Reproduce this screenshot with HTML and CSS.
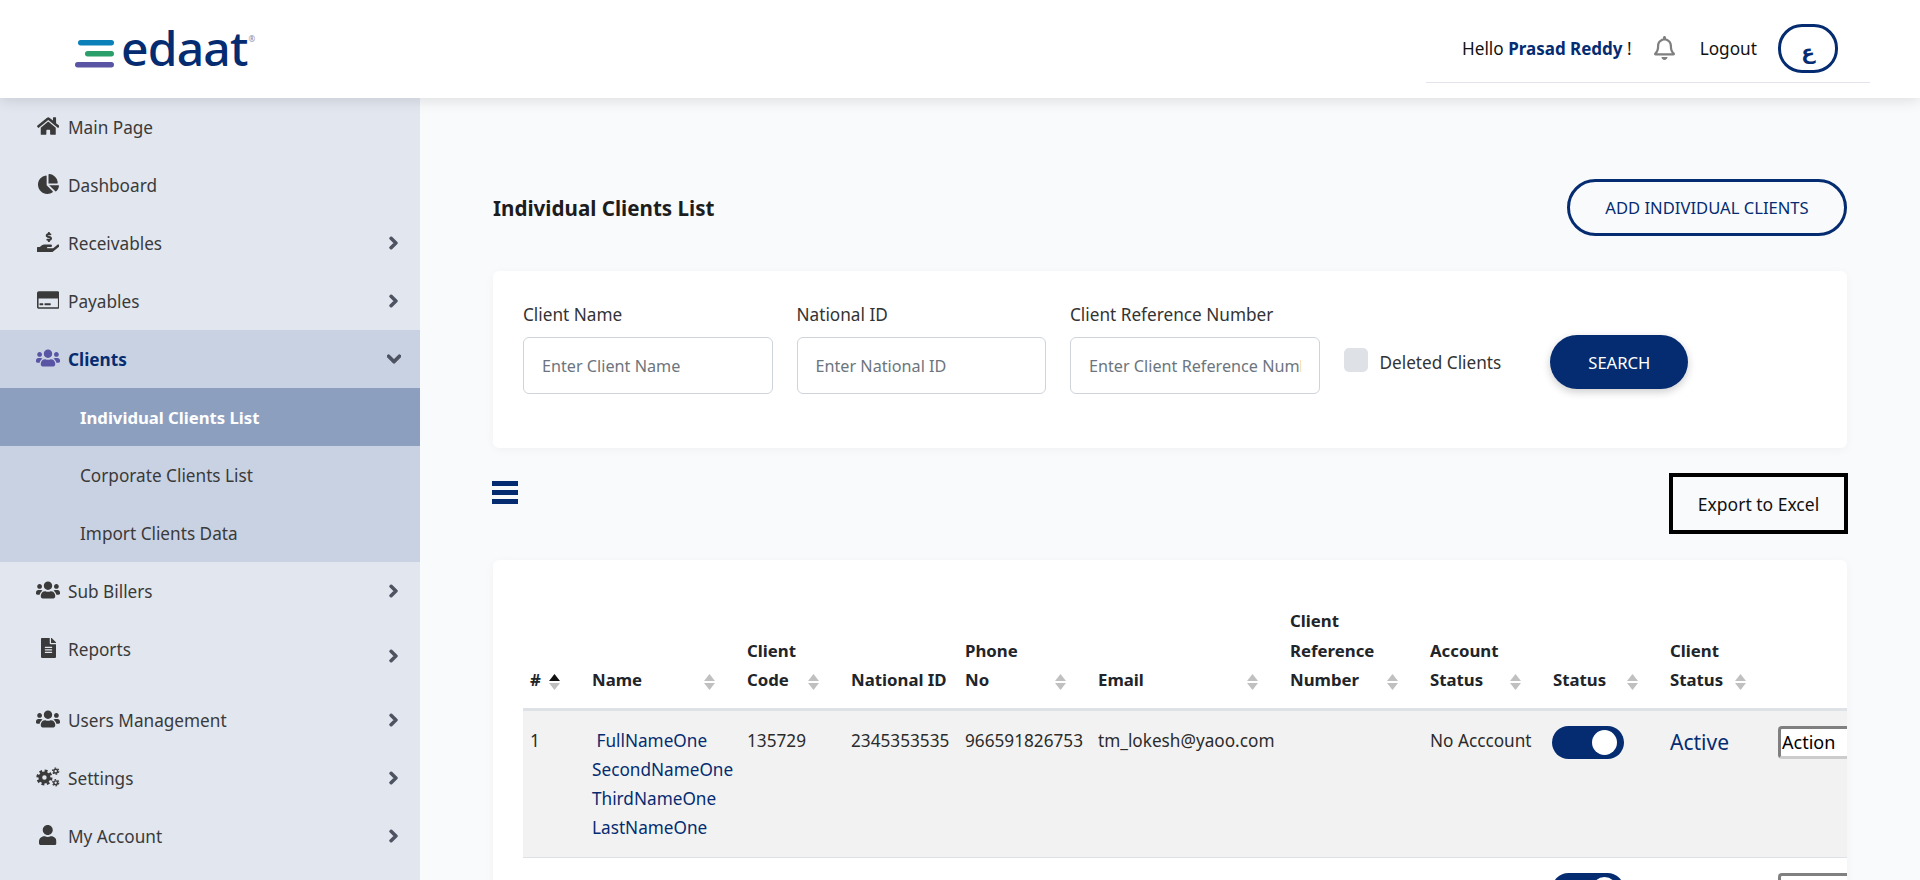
FILE: index.html
```html
<!DOCTYPE html>
<html lang="en">
<head>
  <meta charset="UTF-8" />
  <title>Individual Clients List</title>
  <link rel="stylesheet" href="styles.css">
</head>
<body>
  <!-- icons -->
  <svg class="sprite" xmlns="http://www.w3.org/2000/svg">
    <symbol id="i-home" viewBox="0 0 576 512"><path d="M280.37 148.26L96 300.11V464a16 16 0 0 0 16 16l112.06-.29a16 16 0 0 0 15.92-16V368a16 16 0 0 1 16-16h64a16 16 0 0 1 16 16v95.64a16 16 0 0 0 16 16.05L464 480a16 16 0 0 0 16-16V300L295.67 148.26a12.19 12.19 0 0 0-15.3 0zM571.6 251.47L488 182.56V44.05a12 12 0 0 0-12-12h-56a12 12 0 0 0-12 12v72.61L318.47 43a48 48 0 0 0-61 0L4.34 251.47a12 12 0 0 0-1.6 16.9l25.5 31A12 12 0 0 0 45.15 301l235.22-193.74a12.19 12.19 0 0 1 15.3 0L530.9 301a12 12 0 0 0 16.9-1.6l25.5-31a12 12 0 0 0-1.7-16.93z"/></symbol>
    <symbol id="i-pie" viewBox="0 0 544 512"><path d="M527.79 288H290.5l158.03 158.03c6.04 6.04 15.98 6.53 22.19.68 38.7-36.46 65.32-85.61 73.13-140.86 1.34-9.46-6.51-17.85-16.06-17.85zm-15.83-64.8C503.72 103.74 408.26 8.28 288.8.04 279.68-.59 272 7.1 272 16.24V240h223.77c9.14 0 16.82-7.68 16.19-16.8zM224 288V50.71c0-9.55-8.39-17.4-17.84-16.06C86.99 51.49-4.1 155.6.14 280.37 4.5 408.51 114.83 513.59 243.03 511.98c50.4-.63 96.97-16.87 135.26-44.03 7.9-5.6 8.42-17.23 1.57-24.08L224 288z"/></symbol>
    <symbol id="i-hand" viewBox="0 0 576 512"><path d="M271.06,144.3l54.27,14.3a8.59,8.59,0,0,1,6.63,8.1c0,4.6-4.09,8.4-9.12,8.4h-35.6a30,30,0,0,1-11.19-2.2c-5.24-2.2-11.28-1.7-15.3,2l-19,17.5a11.68,11.68,0,0,0-2.25,2.66,11.42,11.42,0,0,0,3.88,15.74,83.77,83.77,0,0,0,34.51,11.5V240c0,8.8,7.83,16,17.37,16h17.37c9.55,0,17.38-7.2,17.38-16V222.4c32.93-3.6,57.84-31,53.5-63-3.15-23-22.46-41.3-46.56-47.7L282.68,97.4a8.59,8.59,0,0,1-6.63-8.1c0-4.6,4.09-8.4,9.12-8.4h35.6A30,30,0,0,1,332,83.1c5.23,2.2,11.28,1.7,15.3-2l19-17.5A11.31,11.31,0,0,0,368.47,61a11.43,11.43,0,0,0-3.84-15.78,83.82,83.82,0,0,0-34.52-11.5V16c0-8.8-7.82-16-17.37-16H295.37C285.82,0,278,7.2,278,16V33.6c-32.89,3.6-57.85,31-53.51,63C227.63,119.6,247,137.9,271.06,144.3ZM565.27,328.1c-11.8-10.7-30.2-10-42.6,0L430.27,402a63.64,63.64,0,0,1-40,14H272a16,16,0,0,1,0-32h78.29c15.9,0,30.71-10.9,33.25-26.6a31.2,31.2,0,0,0,.46-5.46A32,32,0,0,0,352,320H192a117.66,117.66,0,0,0-74.1,26.29L71.4,384H16A16,16,0,0,0,0,400v96a16,16,0,0,0,16,16H372.77a64,64,0,0,0,40-14L564,377a32,32,0,0,0,1.28-48.9Z"/></symbol>
    <symbol id="i-card" viewBox="0 0 576 512"><path fill-rule="evenodd" d="M48 32h480c26.5 0 48 21.5 48 48v352c0 26.5-21.5 48-48 48H48c-26.5 0-48-21.5-48-48V80c0-26.5 21.5-48 48-48zM40 216v224h496V216zM76 340h72c6.6 0 12 5.4 12 12v28c0 6.6-5.4 12-12 12H76c-6.6 0-12-5.4-12-12v-28c0-6.600 5.400-12 12-12zM204 340h136c6.6 0 12 5.4 12 12v28c0 6.6-5.4 12-12 12H204c-6.6 0-12-5.4-12-12v-28c0-6.6 5.400-12 12-12z"/></symbol>
    <symbol id="i-users" viewBox="0 0 640 512"><path d="M96 224c35.3 0 64-28.7 64-64s-28.7-64-64-64-64 28.7-64 64 28.7 64 64 64zm448 0c35.3 0 64-28.7 64-64s-28.7-64-64-64-64 28.7-64 64 28.7 64 64 64zm32 32h-64c-17.6 0-33.5 7.1-45.1 18.6 40.3 22.1 68.9 62 75.1 109.4h66c17.7 0 32-14.3 32-32v-32c0-35.3-28.7-64-64-64zm-256 0c61.9 0 112-50.1 112-112S381.9 32 320 32 208 82.1 208 144s50.1 112 112 112zm76.8 32h-8.3c-20.8 10-43.9 16-68.5 16s-47.6-6-68.5-16h-8.3C179.6 288 128 339.6 128 403.2V432c0 26.5 21.5 48 48 48h288c26.5 0 48-21.5 48-48v-28.8c0-63.6-51.6-115.2-115.2-115.2zm-223.7-13.4C161.5 263.1 145.6 256 128 256H64c-35.3 0-64 28.7-64 64v32c0 17.7 14.3 32 32 32h65.9c6.3-47.4 34.9-87.3 75.2-109.4z"/></symbol>
    <symbol id="i-file" viewBox="0 0 384 512"><path d="M224 136V0H24C10.7 0 0 10.7 0 24v464c0 13.3 10.7 24 24 24h336c13.3 0 24-10.7 24-24V160H248c-13.2 0-24-10.8-24-24zm64 236c0 6.6-5.4 12-12 12H108c-6.6 0-12-5.4-12-12v-8c0-6.6 5.4-12 12-12h168c6.6 0 12 5.4 12 12v8zm0-64c0 6.6-5.4 12-12 12H108c-6.6 0-12-5.4-12-12v-8c0-6.6 5.4-12 12-12h168c6.6 0 12 5.4 12 12v8zm0-72v8c0 6.6-5.4 12-12 12H108c-6.6 0-12-5.4-12-12v-8c0-6.6 5.4-12 12-12h168c6.6 0 12 5.4 12 12zm96-114.1v6.1H256V0h6.1c6.4 0 12.5 2.5 17 7l97.9 98c4.5 4.5 7 10.6 7 16.9z"/></symbol>
    <symbol id="i-cogs" viewBox="0 0 640 512">
      <circle cx="225" cy="270" r="110" fill="none" stroke="currentColor" stroke-width="100"/>
      <circle cx="225" cy="270" r="180" fill="none" stroke="currentColor" stroke-width="70" stroke-dasharray="76 65.370"/>
      <circle cx="525" cy="100" r="50" fill="none" stroke="currentColor" stroke-width="38"/>
      <circle cx="525" cy="100" r="82" fill="none" stroke="currentColor" stroke-width="32" stroke-dasharray="45 40.860"/>
      <circle cx="525" cy="410" r="50" fill="none" stroke="currentColor" stroke-width="38"/>
      <circle cx="525" cy="410" r="82" fill="none" stroke="currentColor" stroke-width="32" stroke-dasharray="45 40.860"/>
    </symbol>
    <symbol id="i-user" viewBox="0 0 448 512"><path d="M224 256c70.700 0 128-57.300 128-128S294.700 0 224 0 96 57.300 96 128s57.300 128 128 128zm89.600 32h-16.700c-22.200 10.200-46.900 16-72.900 16s-50.600-5.800-72.900-16h-16.700C60.200 288 0 348.200 0 422.400V464c0 26.500 21.500 48 48 48h352c26.500 0 48-21.500 48-48v-41.600c0-74.200-60.200-134.400-134.400-134.400z"/></symbol>
    <symbol id="i-right" viewBox="0 0 320 512"><path d="M285.476 272.971L91.132 467.314c-9.373 9.373-24.569 9.373-33.941 0l-22.667-22.667c-9.357-9.357-9.375-24.522-.04-33.901L188.505 256 34.484 101.255c-9.335-9.379-9.317-24.544.04-33.901l22.667-22.667c9.373-9.373 24.569-9.373 33.941 0L285.475 239.030c9.373 9.372 9.373 24.568.001 33.941z"/></symbol>
    <symbol id="i-down" viewBox="0 0 448 512"><path d="M207.029 381.476L12.686 187.132c-9.373-9.373-9.373-24.569 0-33.941l22.667-22.667c9.357-9.357 24.522-9.375 33.901-.04L224 284.505l154.745-154.021c9.379-9.335 24.544-9.317 33.901.04l22.667 22.667c9.373 9.373 9.373 24.569 0 33.941L240.971 381.476c-9.373 9.372-24.569 9.372-33.942 0z"/></symbol>
    <symbol id="i-bell" viewBox="0 0 448 512"><path d="M439.390 362.290c-19.320-20.760-55.470-51.990-55.470-154.290 0-77.700-54.480-139.900-127.940-155.160V32c0-17.670-14.320-32-31.980-32s-31.980 14.330-31.980 32v20.840C118.560 68.100 64.080 130.300 64.080 208c0 102.300-36.150 133.530-55.470 154.290-6 6.450-8.660 14.160-8.610 21.710.11 16.400 12.980 32 32.100 32h383.800c19.120 0 32-15.600 32.100-32 .05-7.550-2.610-15.270-8.610-21.710zM67.530 368c21.220-27.970 44.420-74.330 44.530-159.420 0-.2-.06-.38-.06-.58 0-61.860 50.140-112 112-112s112 50.140 112 112c0 .2-.06.38-.06.58.11 85.100 23.310 131.460 44.530 159.420H67.530zM224 512c35.320 0 63.970-28.650 63.970-64H160.030c0 35.350 28.650 64 63.970 64z"/></symbol>
    <symbol id="i-sort" viewBox="0 0 11 16"><path d="M5.500 0L11 7H0z"/><path d="M0 9h11l-5.500 7z"/></symbol>
    <symbol id="i-sort-asc" viewBox="0 0 11 16"><path fill="#111" d="M5.500 0L11 7H0z"/><path fill="#c0c0c0" d="M0 9h11l-5.500 7z"/></symbol>
  </svg>

  <!-- ヘッダー -->
  <header class="topbar">
    <a href="#" class="logo">
      <svg class="logo-bars" viewBox="0 0 40 28" width="40" height="28">
        <rect x="3" y="0" width="36" height="5.500" rx="2.700" fill="#0b80b9"/>
        <rect x="10" y="11" width="29" height="5.500" rx="2.700" fill="#2a9f69"/>
        <rect x="0" y="22" width="39" height="5.500" rx="2.700" fill="#5a54a4"/>
      </svg>
      <span class="logo-word">edaat</span><span class="logo-mark">®</span>
    </a>
    <div class="topbar-user">
      <span class="hello">Hello <b>Prasad Reddy</b> !</span>
      <svg class="bell"><use href="#i-bell"/></svg>
      <a href="#" class="logout">Logout</a>
      <button class="lang-btn">ع</button>
    </div>
  </header>

  <div class="layout">
    <!-- サイドバー -->
    <nav class="sidebar">
      <a href="#" class="nav-item">
        <span class="nav-icon"><svg class="w-home"><use href="#i-home"/></svg></span><span class="nav-label">Main Page</span>
      </a>
      <a href="#" class="nav-item">
        <span class="nav-icon"><svg class="w-pie"><use href="#i-pie"/></svg></span><span class="nav-label">Dashboard</span>
      </a>
      <a href="#" class="nav-item">
        <span class="nav-icon"><svg class="w-home"><use href="#i-hand"/></svg></span><span class="nav-label">Receivables</span>
        <svg class="chev"><use href="#i-right"/></svg>
      </a>
      <a href="#" class="nav-item">
        <span class="nav-icon"><svg class="w-home"><use href="#i-card"/></svg></span><span class="nav-label">Payables</span>
        <svg class="chev"><use href="#i-right"/></svg>
      </a>
      <div class="nav-group">
        <a href="#" class="nav-item open">
          <span class="nav-icon"><svg class="w-users"><use href="#i-users"/></svg></span><span class="nav-label">Clients</span>
          <svg class="chev-down"><use href="#i-down"/></svg>
        </a>
        <a href="#" class="nav-sub current">Individual Clients List</a>
        <a href="#" class="nav-sub">Corporate Clients List</a>
        <a href="#" class="nav-sub">Import Clients Data</a>
      </div>
      <a href="#" class="nav-item">
        <span class="nav-icon"><svg class="w-users"><use href="#i-users"/></svg></span><span class="nav-label">Sub Billers</span>
        <svg class="chev"><use href="#i-right"/></svg>
      </a>
      <a href="#" class="nav-item tall">
        <span class="nav-icon"><svg class="w-file"><use href="#i-file"/></svg></span><span class="nav-label">Reports</span>
        <svg class="chev"><use href="#i-right"/></svg>
      </a>
      <a href="#" class="nav-item">
        <span class="nav-icon"><svg class="w-users"><use href="#i-users"/></svg></span><span class="nav-label">Users Management</span>
        <svg class="chev"><use href="#i-right"/></svg>
      </a>
      <a href="#" class="nav-item">
        <span class="nav-icon"><svg class="w-users"><use href="#i-cogs"/></svg></span><span class="nav-label">Settings</span>
        <svg class="chev"><use href="#i-right"/></svg>
      </a>
      <a href="#" class="nav-item">
        <span class="nav-icon"><svg class="w-user"><use href="#i-user"/></svg></span><span class="nav-label">My Account</span>
        <svg class="chev"><use href="#i-right"/></svg>
      </a>
    </nav>

    <!-- コンテンツ -->
    <main class="content">
      <div class="page-head">
        <h1>Individual Clients List</h1>
        <a href="#" class="add-btn">ADD INDIVIDUAL CLIENTS</a>
      </div>

      <form class="filter-card">
        <div class="field">
          <label>Client Name</label>
          <input type="text" placeholder="Enter Client Name">
        </div>
        <div class="field">
          <label>National ID</label>
          <input type="text" placeholder="Enter National ID">
        </div>
        <div class="field">
          <label>Client Reference Number</label>
          <input type="text" placeholder="Enter Client Reference Number">
        </div>
        <div class="filter-actions">
          <span class="check-box"></span>
          <span class="check-label">Deleted Clients</span>
          <button type="button" class="search-btn">SEARCH</button>
        </div>
      </form>

      <div class="toolbar">
        <div class="burger"><span></span><span></span><span></span></div>
        <button class="export-btn">Export to Excel</button>
      </div>

      <section class="table-card">
        <div class="table-wrap">
          <table class="clients">
            <colgroup>
              <col class="c-no"><col class="c-name"><col class="c-code"><col class="c-nid"><col class="c-phone"><col class="c-email"><col class="c-ref"><col class="c-acc"><col class="c-status"><col class="c-cstatus"><col class="c-action">
            </colgroup>
            <thead>
              <tr>
                <th>#<svg class="sort"><use href="#i-sort-asc"/></svg></th>
                <th>Name<svg class="sort"><use href="#i-sort"/></svg></th>
                <th>Client<br>Code<svg class="sort"><use href="#i-sort"/></svg></th>
                <th>National ID</th>
                <th>Phone<br>No<svg class="sort"><use href="#i-sort"/></svg></th>
                <th>Email<svg class="sort"><use href="#i-sort"/></svg></th>
                <th>Client<br>Reference<br>Number<svg class="sort"><use href="#i-sort"/></svg></th>
                <th>Account<br>Status<svg class="sort"><use href="#i-sort"/></svg></th>
                <th>Status<svg class="sort"><use href="#i-sort"/></svg></th>
                <th>Client<br>Status<svg class="sort"><use href="#i-sort"/></svg></th>
                <th></th>
              </tr>
            </thead>
            <tbody>
              <tr class="odd">
                <td>1</td>
                <td><a href="#" class="name-link">&nbsp;FullNameOne SecondNameOne ThirdNameOne LastNameOne</a></td>
                <td>135729</td>
                <td>2345353535</td>
                <td>966591826753</td>
                <td>tm_lokesh@yaoo.com</td>
                <td></td>
                <td>No Acccount</td>
                <td><span class="toggle"></span></td>
                <td><a href="#" class="status-link">Active</a></td>
                <td><button class="action-btn">Action</button></td>
              </tr>
              <tr>
                <td>2</td>
                <td><a href="#" class="name-link">&nbsp;FullNameOne SecondNameOne ThirdNameOne LastNameOne</a></td>
                <td>135718</td>
                <td>1234344344</td>
                <td>966501234107</td>
                <td>t.lokesh@yaoo.com</td>
                <td>MTB</td>
                <td>Valid</td>
                <td><span class="toggle"></span></td>
                <td><a href="#" class="status-link">Active</a></td>
                <td><button class="action-btn">Action</button></td>
              </tr>
            </tbody>
          </table>
        </div>
      </section>
    </main>
  </div>
</body>
</html>
```

FILE: styles.css
```css
html, body {
  margin: 0;
  padding: 0;
  height: 100vh;
  overflow: hidden;
  font-family: "Noto Sans", "Open Sans", sans-serif;
  font-size: 17.2px;
  color: #212529;
  background: #f9fafc;
}

a { text-decoration: none; color: inherit; }
svg { fill: currentColor; }
.sprite { display: none; }

/* ヘッダー */
.topbar {
  position: relative;
  z-index: 5;
  display: flex;
  justify-content: space-between;
  height: 98px;
  padding: 0 50px 0 75px;
  background: #fff;
  box-shadow: 0 2px 14px rgba(0, 0, 0, 0.12);
}

.logo {
  display: flex;
  align-items: center;
  height: 98px;
}
.logo-bars { margin: 9px 6px 0 0; }
.logo-word {
  margin-top: -3px;
  font-size: 48px;
  font-weight: 500;
  color: #052c71;
  line-height: 1;
  letter-spacing: -0.8px;
}
.logo-mark {
  align-self: flex-start;
  margin: 33px 0 0 1px;
  font-size: 8px;
  color: #7d88b0;
}

.topbar-user {
  display: flex;
  align-items: center;
  width: 444px;
  height: 83px;
  box-sizing: border-box;
  padding: 14px 32px 0 36px;
  border-bottom: 1px solid #e3e3ec;
  color: #111;
}
.hello b { color: #052c71; font-weight: 700; font-size: 17px; }
.bell { width: 21px; height: 24px; margin-left: 22px; color: #7f7f7f; }
.logout { margin-left: 25px; }
.lang-btn {
  width: 60px;
  height: 49px;
  margin-left: auto;
  padding: 8px 0 0;
  background: #fff;
  border: 3px solid #052c71;
  border-radius: 24px;
  color: #052c71;
  font-family: "DejaVu Sans", sans-serif;
  font-size: 20px;
  font-weight: 700;
}

.layout {
  display: flex;
  height: 782px;
}

/* サイドバー */
.sidebar {
  flex: 0 0 420px;
  background: #e1e6ef;
  color: #3a3a3a;
}

.nav-item {
  display: flex;
  align-items: center;
  height: 58px;
  padding: 0 22px 0 36px;
}
.nav-item.tall { height: 71px; }
.nav-item.tall .nav-icon,
.nav-item.tall .nav-label { margin-bottom: 13px; }

.nav-icon {
  display: flex;
  justify-content: center;
  width: 24px;
  margin-right: 8px;
  margin-top: -3px;
}
.nav-icon svg { height: 20px; }
.w-home { width: 22.500px; }
.w-pie { width: 21px; }
.w-users { width: 25px; }
.w-file { width: 15px; }
.w-user { width: 17.500px; }

.nav-label { flex: 1; }
.chev {
  width: 9px;
  height: 14px;
  color: #4d5360;
  stroke: currentColor;
  stroke-width: 45;
}
.chev-down {
  width: 14px;
  height: 16px;
  margin-right: -2.500px;
  color: #4d5360;
  stroke: currentColor;
  stroke-width: 40;
}

.nav-group { background: #c9d2e3; }
.nav-item.open { font-weight: 700; color: #052c71; }
.nav-item.open .nav-icon { color: #5a54a4; }

.nav-sub {
  display: flex;
  align-items: center;
  height: 58px;
  padding-left: 80px;
}
.nav-sub.current {
  background: #8c9fbf;
  color: #fff;
  font-size: 16.700px;
  font-weight: 700;
}

/* メイン */
.content {
  flex: 1;
  min-width: 0;
  padding: 81px 73px 0;
}

.page-head {
  display: flex;
  justify-content: space-between;
  align-items: center;
  height: 57px;
}
.page-head h1 {
  margin: 0;
  font-size: 20.600px;
  font-weight: 700;
  color: #1d1d1d;
}
.add-btn {
  display: flex;
  align-items: center;
  justify-content: center;
  width: 280px;
  height: 57px;
  box-sizing: border-box;
  border: 3px solid #052c71;
  border-radius: 29px;
  color: #052c71;
  font-size: 16.600px;
}

.filter-card {
  display: flex;
  gap: 24px;
  height: 177px;
  box-sizing: border-box;
  margin-top: 35px;
  padding: 32px 30px 0;
  background: #fff;
  border-radius: 6px;
  box-shadow: 0 2px 10px rgba(0, 0, 0, 0.04);
}
.field { width: 249.500px; }
.field label {
  display: block;
  height: 24px;
  margin-bottom: 10px;
  line-height: 24px;
  color: #333;
}
.field input {
  width: 100%;
  height: 57px;
  box-sizing: border-box;
  padding: 0 18px;
  border: 1px solid #ced4da;
  border-radius: 6px;
  font-family: inherit;
  font-size: 16.200px;
  outline: none;
}
.field input::placeholder { color: #6c757d; }

.filter-actions {
  display: flex;
  align-items: center;
  height: 54px;
  margin-top: 32px;
}
.check-box {
  width: 24px;
  height: 24px;
  margin-top: -5px;
  background: #dee2e6;
  border-radius: 5px;
}
.check-label { margin-left: 12px; color: #333; }
.search-btn {
  width: 138px;
  height: 54px;
  margin-left: 49px;
  background: #052c71;
  border: 0;
  border-radius: 27px;
  box-shadow: 0 3px 8px rgba(0, 0, 0, 0.2);
  color: #fff;
  font-family: inherit;
  font-size: 16.600px;
}

.toolbar {
  display: flex;
  justify-content: space-between;
  margin-top: 25px;
}
.burger {
  display: flex;
  flex-direction: column;
  gap: 4px;
  width: 26px;
  margin-top: 8px;
  margin-left: -1px;
}
.burger span { height: 5px; background: #052c71; }
.export-btn {
  width: 179px;
  height: 61px;
  margin-right: -1px;
  background: transparent;
  border: 4px solid #000;
  color: #111;
  font-family: inherit;
  font-size: 17.500px;
}

/* テーブル */
.table-card {
  margin-top: 26px;
  padding: 30px 0 0 30px;
  background: #fff;
  border-radius: 6px;
  box-shadow: 0 2px 10px rgba(0, 0, 0, 0.04);
}
.table-wrap { overflow: hidden; }

.clients {
  width: 1398px;
  table-layout: fixed;
  border-collapse: collapse;
  line-height: 29px;
}
.c-no { width: 61px; }
.c-name { width: 155px; }
.c-code { width: 104px; }
.c-nid { width: 114px; }
.c-phone { width: 133px; }
.c-email { width: 192px; }
.c-ref { width: 140px; }
.c-acc { width: 123px; }
.c-status { width: 117px; }
.c-cstatus { width: 108px; }
.c-action { width: 151px; }

.clients th {
  position: relative;
  padding: 16px 8px 13px;
  border-bottom: 3px solid #dee2e6;
  font-size: 16.800px;
  font-weight: 700;
  line-height: 29.500px;
  text-align: left;
  vertical-align: bottom;
  color: #212529;
}
.clients td {
  padding: 15px 8px;
  border-bottom: 1px solid #dee2e6;
  vertical-align: top;
  color: #2b2b2b;
}
.clients th:first-child,
.clients td:first-child { padding-left: 7px; }
.clients tr.odd td { background: #f2f2f2; }

/* ソートの矢印 */
.sort {
  position: absolute;
  right: 24px;
  bottom: 18px;
  width: 11px;
  height: 16px;
  color: #c0c0c0;
}

.name-link { color: #052c71; }
.status-link {
  font-size: 21px;
  line-height: 33px;
  color: #052c71;
}

.toggle {
  position: relative;
  display: block;
  width: 72px;
  height: 33px;
  margin-left: -1px;
  background: #052c71;
  border-radius: 17px;
}
.toggle::after {
  content: "";
  position: absolute;
  top: 4px;
  right: 7px;
  width: 25px;
  height: 25px;
  background: #fff;
  border-radius: 50%;
}

.action-btn {
  display: block;
  width: 130px;
  height: 33px;
  padding: 0 0 0 1px;
  background: #fff;
  border: 3px solid;
  border-color: #808080 #ccc #ccc #808080;
  border-radius: 4px;
  color: #000;
  font-family: inherit;
  font-size: 18px;
  text-align: left;
}
```
